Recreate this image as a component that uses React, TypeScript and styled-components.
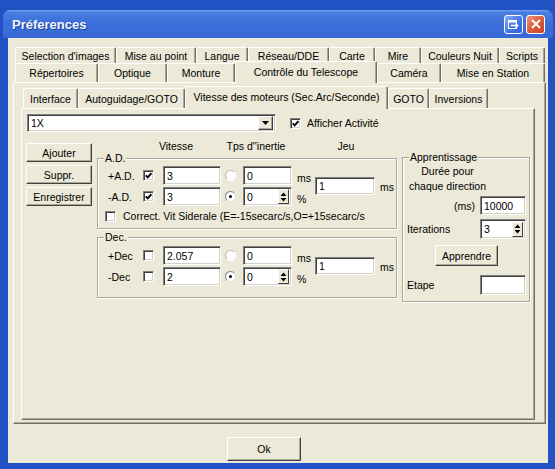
import React from "react";
import styled, { createGlobalStyle } from "styled-components";

const GlobalStyle = createGlobalStyle`
  html, body {
    margin: 0;
    padding: 0;
  }
  body {
    background: #2251c3;
    font-family: "Liberation Sans", Arial, sans-serif;
    font-size: 10.5px;
    color: #000;
  }
  * {
    box-sizing: border-box;
  }
`;

const Frame = styled.div`
  width: 555px;
  height: 469px;
  display: flex;
  flex-direction: column;
  background: #2251c3;
  overflow: hidden;
`;

const TitleBar = styled.div`
  height: 28px;
  margin: 10px 2px 0 3px;
  padding: 0 8px 0 9px;
  display: flex;
  align-items: center;
  gap: 3px;
  border-radius: 7px 7px 0 0;
  background: linear-gradient(#7aa6f2 0, #4a7fe2 2px, #3d70da 40%, #3769d6 100%);
`;

const TitleText = styled.span`
  flex: 1;
  color: #f2f6ff;
  font-weight: bold;
  font-size: 13px;
  text-shadow: 1px 1px 0 #1a3f9c;
`;

const CaptionButton = styled.span<{ $tone: "blue" | "red" }>`
  width: 19px;
  height: 19px;
  border: 1px solid #fff;
  border-radius: 3px;
  display: flex;
  align-items: center;
  justify-content: center;
  background: ${p =>
    p.$tone === "red"
      ? "linear-gradient(135deg, #ec9479, #d8583a 55%, #c64526)"
      : "linear-gradient(135deg, #86adf5, #4478e6 55%, #2d62d8)"};
`;

const Client = styled.div`
  flex: 1;
  margin: 0 7px 6px 8px;
  padding: 9px 2px 0 5px;
  background: #ece9d8;
  display: flex;
  flex-direction: column;
`;

const TabRow = styled.div<{ $h: number }>`
  display: flex;
  align-items: flex-end;
  height: ${p => p.$h}px;
  margin-left: 2px;
`;

const Tab = styled.div<{ $w: number; $active?: boolean }>`
  position: relative;
  z-index: ${p => (p.$active ? 2 : 1)};
  width: ${p => p.$w}px;
  height: ${p => (p.$active ? "calc(100% + 3px)" : "100%")};
  margin-bottom: ${p => (p.$active ? "-1px" : "0")};
  padding-bottom: ${p => (p.$active ? "2px" : "0")};
  display: flex;
  align-items: center;
  justify-content: center;
  white-space: nowrap;
  background: #ece9d8;
  border-top: 1px solid #fff;
  border-left: 1px solid #fff;
  border-right: 1px solid #716f64;
  box-shadow: inset -1px 0 0 #aca899;
  border-radius: 2px 2px 0 0;
`;

const Panel = styled.div`
  display: flex;
  flex-direction: column;
  background: #ece9d8;
  border: 1px solid;
  border-color: #fff #716f64 #716f64 #fff;
  box-shadow: inset -1px -1px 0 #aca899;
`;

const OuterPanel = styled(Panel)`
  height: 342px;
  padding: 5px 10px 3px 7px;
`;

const InnerPanel = styled(Panel)`
  flex: 1;
  padding: 5px 0 0 5px;
`;

const TopRow = styled.div`
  display: flex;
  align-items: center;
  height: 18px;
`;

const Field = styled.div<{ $w: number; $h?: number }>`
  width: ${p => p.$w}px;
  height: ${p => p.$h ?? 19}px;
  flex: none;
  background: #fff;
  border: 1px solid;
  border-color: #808080 #fff #fff #808080;
  box-shadow: inset 1px 1px 0 #404040, inset -1px -1px 0 #d4d0c8;
  display: flex;
  align-items: center;
  padding: 0 2px 0 3px;
  white-space: nowrap;
`;

const DropButton = styled.span`
  margin-left: auto;
  width: 15px;
  height: 14px;
  background: #ece9d8;
  border: 1px solid;
  border-color: #fff #404040 #404040 #fff;
  box-shadow: inset -1px -1px 0 #aca899;
  display: flex;
  align-items: center;
  justify-content: center;
`;

const Spinner = styled.span`
  margin-left: auto;
  width: 11px;
  height: 15px;
  background: #ece9d8;
  border: 1px solid;
  border-color: #fff #404040 #404040 #fff;
  display: flex;
  align-items: center;
  justify-content: center;
`;

const CheckBox = styled.span`
  width: 11px;
  height: 11px;
  flex: none;
  background: #fff;
  border: 1px solid;
  border-color: #808080 #fff #fff #808080;
  box-shadow: inset 1px 1px 0 #404040, inset -1px -1px 0 #d4d0c8;
  display: inline-flex;
  align-items: center;
  justify-content: center;
`;

const Radio = styled.span<{ $on?: boolean }>`
  width: 11px;
  height: 11px;
  flex: none;
  border-radius: 50%;
  background: #fff;
  border: 1px solid;
  border-color: ${p => (p.$on ? "#808080 #e4e2d6 #e4e2d6 #808080" : "#b8b6aa #fff #fff #b8b6aa")};
  display: inline-flex;
  align-items: center;
  justify-content: center;
  &::after {
    content: "";
    width: 3px;
    height: 3px;
    border-radius: 50%;
    background: ${p => (p.$on ? "#000" : "transparent")};
  }
`;

const CheckLabel = styled.label<{ $ml?: number }>`
  display: flex;
  align-items: center;
  gap: 6px;
  margin-left: ${p => p.$ml ?? 0}px;
`;

const Button = styled.button<{ $w: number; $h: number }>`
  width: ${p => p.$w}px;
  height: ${p => p.$h}px;
  padding: 0;
  font: inherit;
  color: #000;
  background: #ece9d8;
  border: 1px solid;
  border-color: #fff #404040 #404040 #fff;
  box-shadow: inset -1px -1px 0 #aca899;
  border-radius: 1px;
`;

const Body = styled.div`
  display: flex;
  align-items: flex-start;
  margin-top: 8px;
`;

const ButtonColumn = styled.div`
  display: flex;
  flex-direction: column;
  gap: 3px;
  margin: 3px 0 0 -1px;
`;

const MiddleColumn = styled.div`
  width: 300px;
  margin-left: 5px;
  display: flex;
  flex-direction: column;
`;

const HeaderRow = styled.div`
  display: flex;
  height: 12px;
  line-height: 12px;
`;

const Header = styled.span<{ $w: number; $ml: number }>`
  width: ${p => p.$w}px;
  margin-left: ${p => p.$ml}px;
  text-align: center;
  white-space: nowrap;
`;

const Box = styled.fieldset<{ $mt?: number }>`
  margin: ${p => p.$mt ?? 0}px 0 0 0;
  padding: 0;
  min-width: 0;
  border: 1px solid #aca899;
  box-shadow: 1px 1px 0 #fff, inset 1px 1px 0 #fff;
`;

const Legend = styled.legend`
  margin-left: 6px;
  padding: 0 1px;
  line-height: 13px;
  background: #ece9d8;
`;

const BoxBody = styled.div<{ $pt: number; $pb: number; $pl: number }>`
  padding: ${p => p.$pt}px 3px ${p => p.$pb}px ${p => p.$pl}px;
  display: flex;
  flex-direction: column;
`;

const AxisBlock = styled.div`
  display: flex;
  align-items: center;
`;

const AxisRows = styled.div`
  display: flex;
  flex-direction: column;
  gap: 2px;
`;

const AxisRow = styled.div`
  display: flex;
  align-items: center;
  height: 19px;
`;

const AxisLabel = styled.span`
  width: 35px;
  white-space: nowrap;
`;

const Gap = styled.span<{ $w: number }>`
  width: ${p => p.$w}px;
  flex: none;
`;

const Unit = styled.span`
  width: 14px;
  align-self: flex-end;
  line-height: 13px;
  margin-left: 5px;
`;

const JeuUnit = styled.span`
  margin-left: 5px;
  padding-top: 2px;
`;

const CorrectRow = styled.div`
  display: flex;
  align-items: center;
  gap: 7px;
  margin: 4px 0 0 -3px;
  white-space: nowrap;
`;

const LearnBox = styled(Box)`
  width: 128px;
  margin: 11px 0 0 5px;
`;

const LearnBody = styled.div`
  padding: 0 3px 6px 4px;
  display: flex;
  flex-direction: column;
`;

const DurationText = styled.div`
  width: 85px;
  line-height: 15px;
  text-align: center;
  margin-left: -2px;
`;

const LearnRow = styled.div<{ $mt: number; $end?: boolean }>`
  display: flex;
  align-items: center;
  justify-content: ${p => (p.$end ? "flex-end" : "space-between")};
  gap: 5px;
  margin-top: ${p => p.$mt}px;
`;

const LearnButton = styled(Button)`
  align-self: center;
  margin-top: 6px;
`;

const Footer = styled.div`
  flex: 1;
  padding: 13px 0 0 214px;
`;

const Tick = () => (
  <svg width="7" height="7" viewBox="0 0 7 7">
    <polyline points="0.8,3.4 2.7,5.4 6.4,1.2" fill="none" stroke="#000" strokeWidth="1.9" />
  </svg>
);

const Check = ({ on }: { on?: boolean }) => <CheckBox>{on && <Tick />}</CheckBox>;

const SpinArrows = () => (
  <svg width="7" height="10" viewBox="0 0 7 10">
    <path d="M3.5 0.5 L6.5 4 H0.5 Z M0.5 6 H6.5 L3.5 9.5 Z" fill="#000" />
  </svg>
);

type AxisProps = {
  labels: [string, string];
  checked: boolean;
  speeds: [string, string];
};

const AxisGroup = ({ labels, checked, speeds }: AxisProps) => (
  <AxisBlock>
    <AxisRows>
      <AxisRow>
        <AxisLabel>{labels[0]}</AxisLabel>
        <Check on={checked} />
        <Gap $w={9} />
        <Field $w={58}>{speeds[0]}</Field>
        <Gap $w={4} />
        <Radio />
        <Gap $w={7} />
        <Field $w={49}>0</Field>
        <Unit>ms</Unit>
      </AxisRow>
      <AxisRow>
        <AxisLabel>{labels[1]}</AxisLabel>
        <Check on={checked} />
        <Gap $w={9} />
        <Field $w={58}>{speeds[1]}</Field>
        <Gap $w={4} />
        <Radio $on />
        <Gap $w={7} />
        <Field $w={49}>
          0
          <Spinner>
            <SpinArrows />
          </Spinner>
        </Field>
        <Unit>%</Unit>
      </AxisRow>
    </AxisRows>
    <Gap $w={4} />
    <Field $w={60} $h={18}>1</Field>
    <JeuUnit>ms</JeuUnit>
  </AxisBlock>
);

const row1 = [
  ["Selection d'images", 101],
  ["Mise au point", 80],
  ["Langue", 52],
  ["Réseau/DDE", 81],
  ["Carte", 46],
  ["Mire", 46],
  ["Couleurs Nuit", 78],
  ["Scripts", 46],
] as const;

const row2 = [
  ["Répertoires", 83],
  ["Optique", 69],
  ["Monture", 68],
  ["Contrôle du Telescope", 142],
  ["Caméra", 64],
  ["Mise en Station", 104],
] as const;

const innerTabs = [
  ["Interface", 55],
  ["Autoguidage/GOTO", 107],
  ["Vitesse des moteurs (Sec.Arc/Seconde)", 203],
  ["GOTO", 41],
  ["Inversions", 59],
] as const;

export default function App() {
  return (
    <>
      <GlobalStyle />
      <Frame>
        <TitleBar>
          <TitleText>Préferences</TitleText>
          <CaptionButton $tone="blue">
            <svg width="11" height="9" viewBox="0 0 11 9">
              <rect x="0.5" y="0.5" width="8" height="8" fill="none" stroke="#fff" />
              <rect x="0.5" y="0.5" width="8" height="2" fill="#fff" />
              <path d="M3 5.5 H9.5 M7.5 3.5 L9.8 5.5 L7.5 7.5" fill="none" stroke="#fff" strokeWidth="1.3" />
            </svg>
          </CaptionButton>
          <CaptionButton $tone="red">
            <svg width="10" height="10" viewBox="0 0 10 10">
              <path d="M1 1 L9 9 M9 1 L1 9" stroke="#fff" strokeWidth="2" />
            </svg>
          </CaptionButton>
        </TitleBar>
        <Client>
          <TabRow $h={16}>
            {row1.map(([label, w]) => (
              <Tab key={label} $w={w}>
                {label}
              </Tab>
            ))}
          </TabRow>
          <TabRow $h={19}>
            {row2.map(([label, w]) => (
              <Tab key={label} $w={w} $active={label === "Contrôle du Telescope"}>
                {label}
              </Tab>
            ))}
          </TabRow>
          <OuterPanel>
            <TabRow $h={20}>
              {innerTabs.map(([label, w]) => (
                <Tab key={label} $w={w} $active={label.startsWith("Vitesse")}>
                  {label}
                </Tab>
              ))}
            </TabRow>
            <InnerPanel>
              <TopRow>
                <Field $w={249} $h={18}>
                  1X
                  <DropButton>
                    <svg width="7" height="4" viewBox="0 0 7 4">
                      <path d="M0 0 H7 L3.5 4 Z" fill="#000" />
                    </svg>
                  </DropButton>
                </Field>
                <CheckLabel $ml={14}>
                  <Check on />
                  Afficher Activité
                </CheckLabel>
              </TopRow>
              <Body>
                <ButtonColumn>
                  <Button $w={66} $h={19}>Ajouter</Button>
                  <Button $w={66} $h={19}>Suppr.</Button>
                  <Button $w={66} $h={19}>Enregistrer</Button>
                </ButtonColumn>
                <MiddleColumn>
                  <HeaderRow>
                    <Header $w={52} $ml={53}>Vitesse</Header>
                    <Header $w={70} $ml={19}>Tps d''inertie</Header>
                    <Header $w={60} $ml={25}>Jeu</Header>
                  </HeaderRow>
                  <Box>
                    <Legend>A.D.</Legend>
                    <BoxBody $pt={1} $pb={6} $pl={10}>
                      <AxisGroup labels={["+A.D.", "-A.D."]} checked speeds={["3", "3"]} />
                      <CorrectRow>
                        <Check />
                        Correct. Vit Siderale (E=-15secarc/s,O=+15secarc/s
                      </CorrectRow>
                    </BoxBody>
                  </Box>
                  <Box $mt={2}>
                    <Legend>Dec.</Legend>
                    <BoxBody $pt={2} $pb={11} $pl={10}>
                      <AxisGroup labels={["+Dec", "-Dec"]} checked={false} speeds={["2.057", "2"]} />
                    </BoxBody>
                  </Box>
                </MiddleColumn>
                <LearnBox>
                  <Legend>Apprentissage</Legend>
                  <LearnBody>
                    <DurationText>
                      Durée pour
                      <br />
                      chaque direction
                    </DurationText>
                    <LearnRow $mt={2} $end>
                      <span>(ms)</span>
                      <Field $w={46}>10000</Field>
                    </LearnRow>
                    <LearnRow $mt={4}>
                      <span>Iterations</span>
                      <Field $w={46} $h={20}>
                        3
                        <Spinner>
                          <SpinArrows />
                        </Spinner>
                      </Field>
                    </LearnRow>
                    <LearnButton $w={63} $h={21}>Apprendre</LearnButton>
                    <LearnRow $mt={9}>
                      <span>Etape</span>
                      <Field $w={46} $h={20} />
                    </LearnRow>
                  </LearnBody>
                </LearnBox>
              </Body>
            </InnerPanel>
          </OuterPanel>
          <Footer>
            <Button $w={74} $h={24}>Ok</Button>
          </Footer>
        </Client>
      </Frame>
    </>
  );
}
